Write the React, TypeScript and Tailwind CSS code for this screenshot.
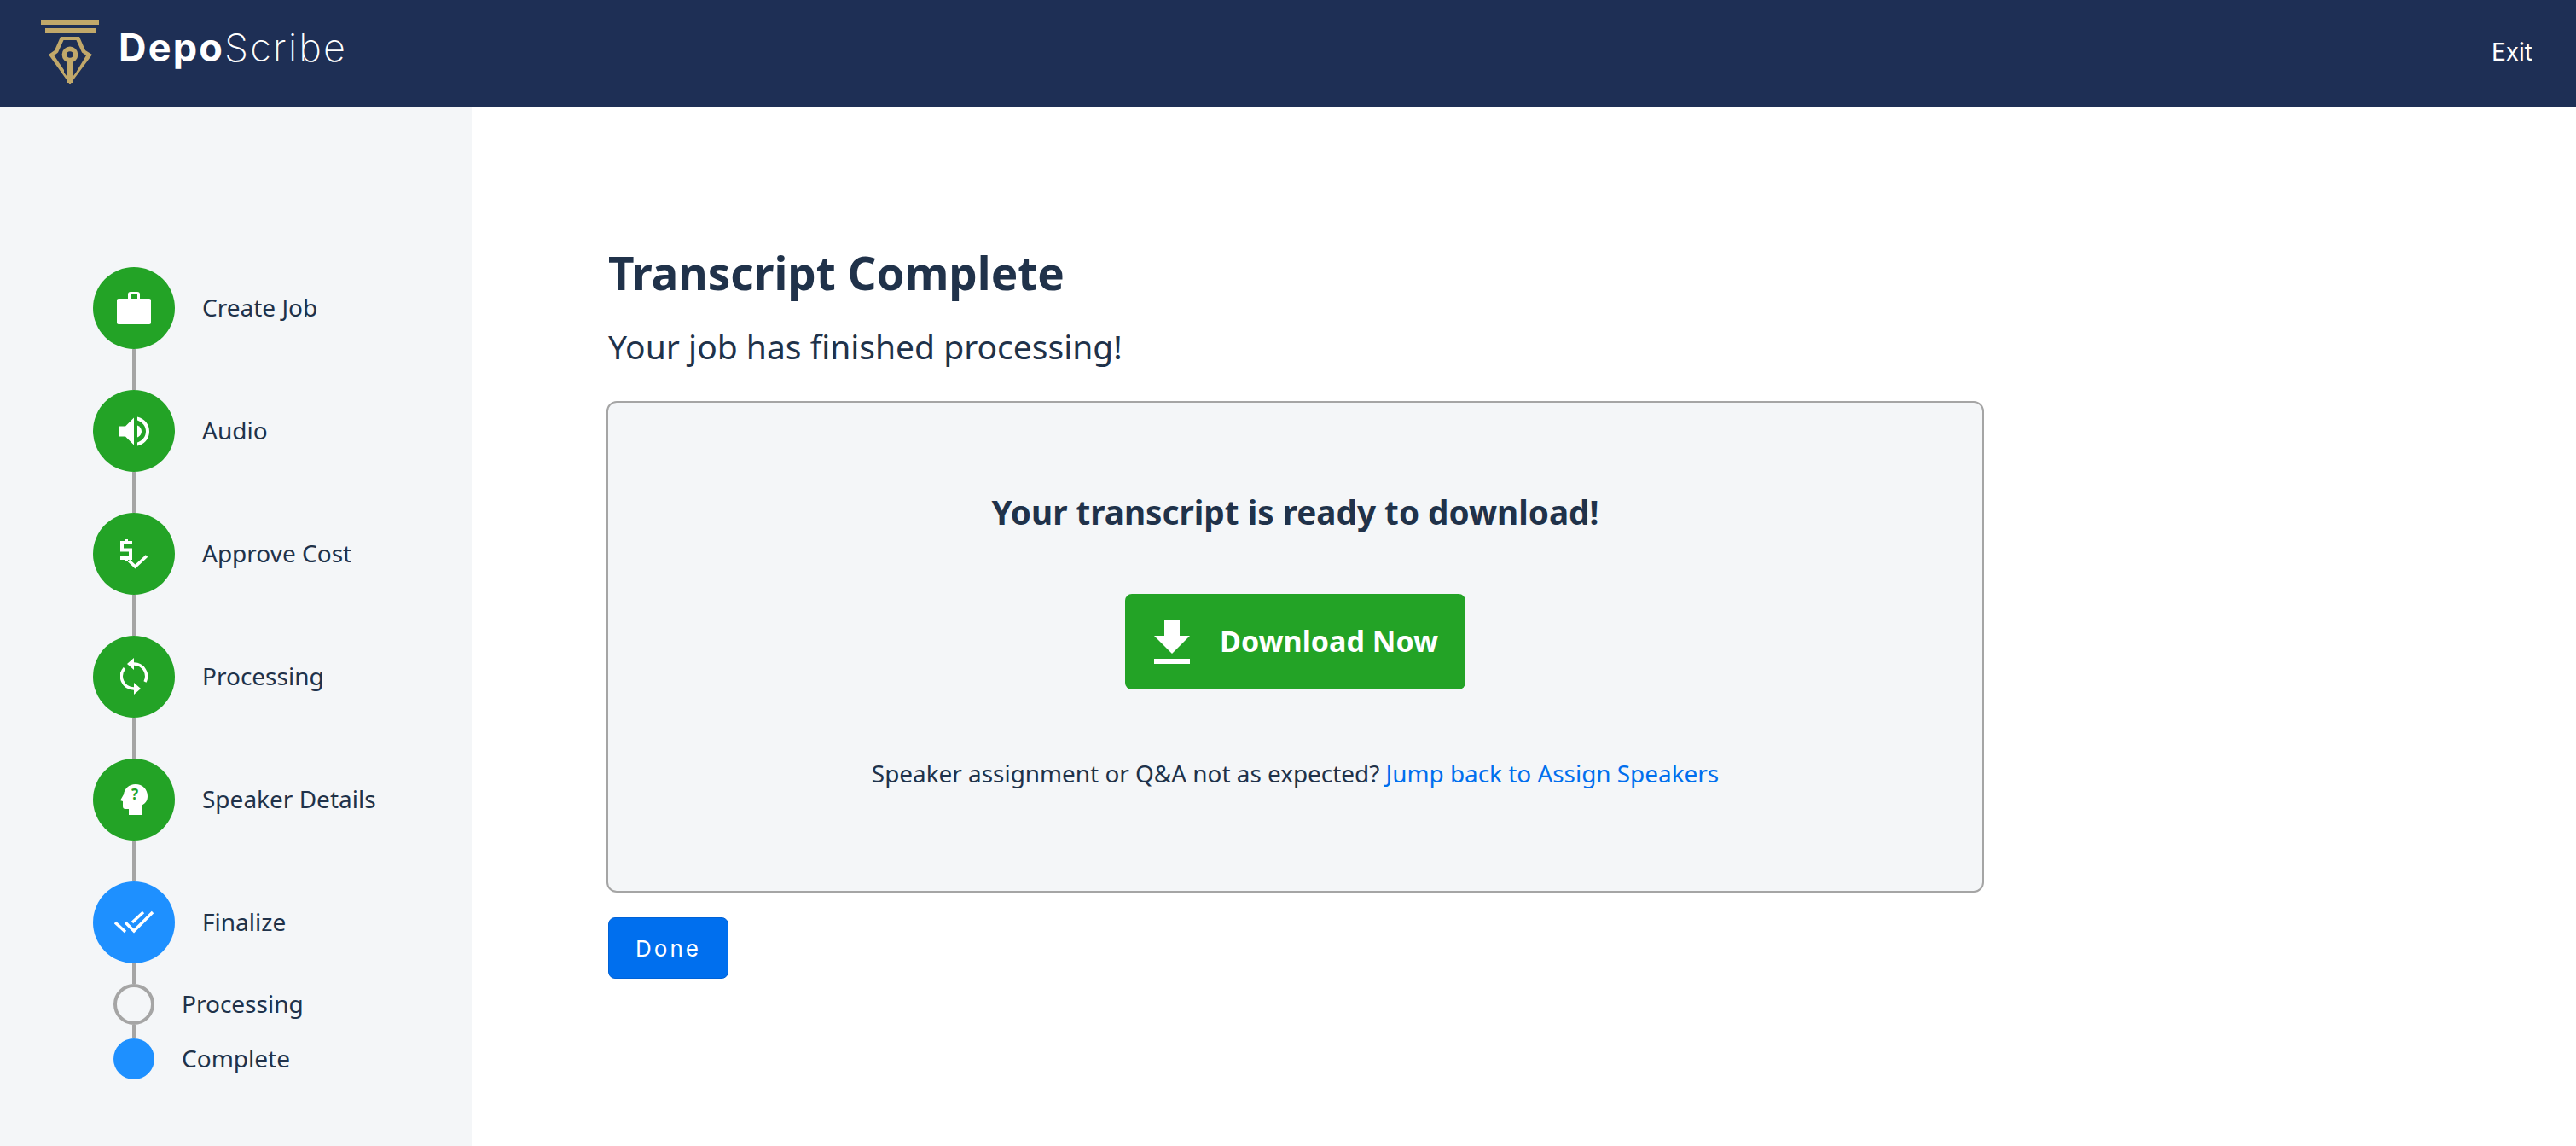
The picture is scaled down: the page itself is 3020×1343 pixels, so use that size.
import React from 'react';

const font = { fontFamily: '"Noto Sans", sans-serif' };
const inter = { fontFamily: 'Inter, sans-serif' };

const Logo = () => (
  <svg width="70" height="76" viewBox="0 0 70 76" className="shrink-0 mb-[4px]">
    <g fill="#c1a86a">
      <rect x="0" y="0" width="68" height="6" />
      <rect x="5" y="10" width="59" height="6" />
      <path fillRule="evenodd" d="M23 20 H45 L52 36 L60 41 L34 76 L9 41 L16 36 Z M26.5 24 L20 38.5 L15.5 42 L27 59 V62 L34 71 L41 62 L53 42 L48 38.5 L41.5 24 Z" />
      <circle cx="34" cy="41" r="6.6" fill="none" stroke="#c1a86a" strokeWidth="5.6" />
      <rect x="30.5" y="47" width="7" height="27" />
    </g>
  </svg>
);

const Briefcase = () => (
  <svg width="40" height="38" viewBox="0 0 40 38" fill="#fff">
    <path fillRule="evenodd" d="M2 8 H13 V3 Q13 0 16 0 H24 Q27 0 27 3 V8 H38 Q40 8 40 10 V36 Q40 38 38 38 H2 Q0 38 0 36 V10 Q0 8 2 8 Z M16 3 V8 H24 V3 Z" />
  </svg>
);

const Speaker = () => (
  <svg width="36" height="35" viewBox="0 0 36 34" fill="#fff">
    <path d="M0 11 H8 L18 1 V33 L8 23 H0 Z" />
    <path d="M22 0 C31 2 36 9 36 17 C36 25 31 32 22 34 V30 C28 28 32 23 32 17 C32 11 28 6 22 4 Z" />
    <path d="M22 10 C25 11 27 14 27 17 C27 20 25 23 22 24 Z" />
  </svg>
);

const DollarCheck = () => (
  <svg width="34" height="36" viewBox="0 0 34 36" fill="none">
    <path d="M15 5 H3 V13.5 H13 V23 H1 M8 1 V5 M8 23 V27" stroke="#fff" strokeWidth="4" />
    <path d="M11 26 L18.5 33 L32 20.5" stroke="#fff" strokeWidth="3.6" />
  </svg>
);

const Sync = () => (
  <svg width="32" height="44" viewBox="0 0 32 44" fill="none">
    <path d="M16 7 A14.5 14.5 0 0 1 29 28" stroke="#fff" strokeWidth="3.4" />
    <path d="M5 12 A14.5 14.5 0 0 0 16 36" stroke="#fff" strokeWidth="3.4" />
    <path d="M16 0 L8 7 L16 14 Z M16 29 L24 36 L16 43 Z" fill="#fff" />
  </svg>
);

const HeadQuestion = () => (
  <svg width="32" height="36" viewBox="0 0 32 36">
    <path fill="#fff" d="M18 0 C26 0 32 6 32 14 C32 19 30 22 25 25 V36 H10 V29 H6 C4 29 3 28 3 26 V20 L0 19 L4 12 C5 5 10 0 18 0 Z" />
    <text x="17" y="18" textAnchor="middle" fontSize="17" fontWeight="700" fill="#23a326" style={font}>?</text>
  </svg>
);

const DoubleCheck = () => (
  <svg width="46" height="28" viewBox="0 0 46 28" fill="none" stroke="#fff" strokeWidth="3.4">
    <path d="M1 14 L13 25" />
    <path d="M13 14 L23 24 L45 2" />
    <path d="M21 14 L34 2" />
  </svg>
);

const DownloadIcon = () => (
  <svg width="42" height="51" viewBox="0 0 42 51" fill="#fff" className="shrink-0">
    <path d="M12 0 H30 V18 H42 L21 39 L0 18 H12 Z" />
    <rect x="0" y="45" width="42" height="6" />
  </svg>
);

type Step = { label: string; icon: React.ReactNode; color: string };

const steps: Step[] = [
  { label: 'Create Job', icon: <Briefcase />, color: 'bg-[#23a326]' },
  { label: 'Audio', icon: <Speaker />, color: 'bg-[#23a326]' },
  { label: 'Approve Cost', icon: <DollarCheck />, color: 'bg-[#23a326]' },
  { label: 'Processing', icon: <Sync />, color: 'bg-[#23a326]' },
  { label: 'Speaker Details', icon: <HeadQuestion />, color: 'bg-[#23a326]' },
  { label: 'Finalize', icon: <DoubleCheck />, color: 'bg-[#1e90ff]' },
];

const Sidebar = () => (
  <aside className="w-[553px] shrink-0 bg-[#f4f6f8] pt-[188px] pl-[109px]">
    {steps.map((s) => (
      <div key={s.label} className="flex flex-col">
        <div className="flex items-center">
          <div className={`w-24 h-24 rounded-full flex items-center justify-center ${s.color}`}>{s.icon}</div>
          <span className="ml-8 mb-[2px] text-[28px] text-[#20324a]">{s.label}</span>
        </div>
        {s.label !== 'Finalize' && <div className="w-1 h-12 ml-[46px] bg-[#a5a5a5]" />}
      </div>
    ))}
    <div className="w-1 h-6 ml-[46px] bg-[#a5a5a5]" />
    <div className="flex items-center ml-6">
      <div className="w-12 h-12 rounded-full border-4 border-[#a5a5a5]" />
      <span className="ml-8 mb-[2px] text-[28px] text-[#20324a]">Processing</span>
    </div>
    <div className="w-1 h-4 ml-[46px] bg-[#a5a5a5]" />
    <div className="flex items-center ml-6">
      <div className="w-12 h-12 rounded-full bg-[#1e90ff]" />
      <span className="ml-8 mb-[2px] text-[28px] text-[#20324a]">Complete</span>
    </div>
  </aside>
);

export default function App() {
  return (
    <div className="w-[3020px] h-[1343px] bg-white flex flex-col overflow-hidden" style={font}>
      <header className="h-[125px] shrink-0 bg-[#1e2f55] flex items-center justify-between pl-12 pr-[51px]">
        <div className="flex items-center">
          <Logo />
          <span className="ml-[21px] mb-[14px] text-[45px] leading-none text-white tracking-[2.2px]" style={inter}>
            <span className="font-bold">Depo</span>
            <span className="font-extralight">Scribe</span>
          </span>
        </div>
        <span className="text-[28px] text-white mb-[4px]" style={inter}>Exit</span>
      </header>
      <div className="flex flex-1">
        <Sidebar />
        <main className="pl-[160px] flex-1">
          <h1 className="mt-[160px] text-[53px] leading-[70px] font-bold text-[#20324a]">Transcript Complete</h1>
          <p className="mt-[25px] text-[39px] leading-[52px] text-[#20324a]">Your job has finished processing!</p>
          <section className="mt-[38px] -ml-[2px] w-[1615px] h-[576px] rounded-xl border-2 border-[#a5a5a5] bg-[#f4f6f8] flex flex-col items-center pt-[102px]">
            <h2 className="text-[38.7px] leading-[52px] font-bold text-[#20324a]">Your transcript is ready to download!</h2>
            <button className="mt-[70px] w-[399px] h-[112px] rounded-lg bg-[#23a326] flex items-center pl-[34px]">
              <DownloadIcon />
              <span className="ml-[35px] mb-[2px] text-[34px] font-bold text-white">Download Now</span>
            </button>
            <p className="mt-[78px] text-[27.9px] text-[#20324a]">
              Speaker assignment or Q&amp;A not as expected?{' '}
              <a className="text-[#006fee]">Jump back to Assign Speakers</a>
            </p>
          </section>
          <button className="block mt-[29px] w-[141px] h-[72px] rounded-lg bg-[#006fee] border border-[#0062d6] text-white text-[26px] tracking-[3px]" style={inter}>
            Done
          </button>
        </main>
      </div>
    </div>
  );
}
